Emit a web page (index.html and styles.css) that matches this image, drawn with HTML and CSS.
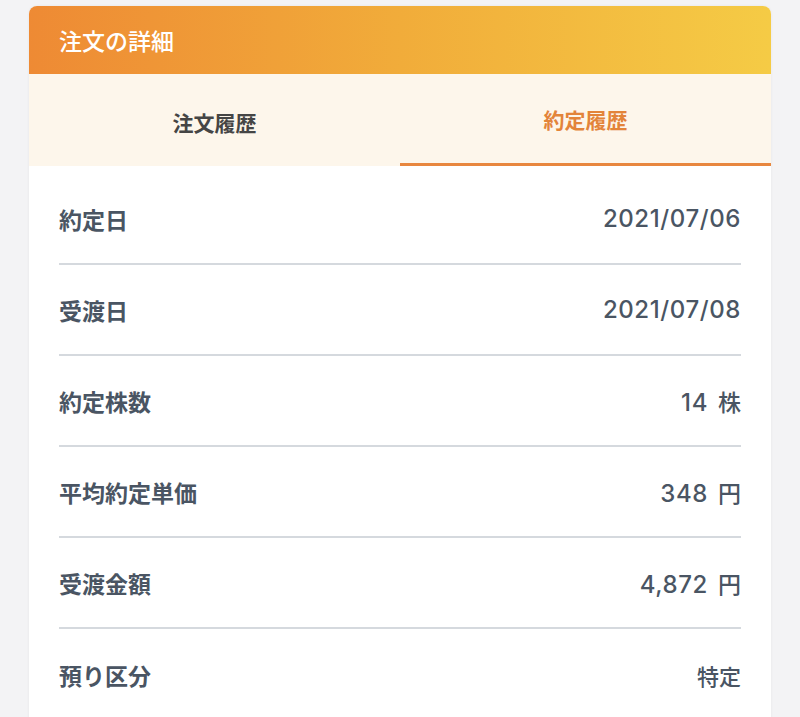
FILE: index.html
```html
<!DOCTYPE html>
<html lang="ja">
<head>
<meta charset="utf-8">
<link rel="stylesheet" href="styles.css">
</head>
<body>
<div class="card">
  <div class="card-header">注文の詳細</div>
  <div class="tabs">
    <div class="tab">注文履歴</div>
    <div class="tab active">約定履歴</div>
  </div>
  <div class="rows">
    <div class="row"><span class="label">約定日</span><span class="value">2021/07/06</span></div>
    <div class="row"><span class="label">受渡日</span><span class="value">2021/07/08</span></div>
    <div class="row"><span class="label">約定株数</span><span class="value">14<span class="unit">株</span></span></div>
    <div class="row"><span class="label">平均約定単価</span><span class="value">348<span class="unit">円</span></span></div>
    <div class="row"><span class="label">受渡金額</span><span class="value">4,872<span class="unit">円</span></span></div>
    <div class="row last"><span class="label">預り区分</span><span class="value text">特定</span></div>
  </div>
</div>
</body>
</html>
```
FILE: styles.css
```css
html, body {
  margin: 0;
  padding: 0;
  background: #f3f3f5;
  font-family: "Noto Sans CJK JP", "Noto Sans", sans-serif;
}
body {
  padding: 6px 29px 0 29px;
  height: 717px;
  box-sizing: border-box;
  overflow: hidden;
}
.card {
  background: #ffffff;
  border-radius: 8px 8px 0 0;
  overflow: hidden;
  box-shadow: 0 0 3px rgba(0,0,0,0.06);
}
.card-header {
  height: 68px;
  display: flex;
  align-items: center;
  padding-left: 30px;
  color: #ffffff;
  font-size: 23px;
  font-weight: 500;
  background: linear-gradient(90deg, #ee8a34 0%, #f1ac3a 50%, #f5cb45 100%);
}
.tabs {
  display: flex;
  background: #fdf6eb;
  height: 92px;
}
.tab {
  flex: 1;
  display: flex;
  align-items: center;
  justify-content: center;
  font-size: 21px;
  font-weight: 700;
  color: #454545;
  box-sizing: border-box;
  padding-top: 3px;
}
.tab.active {
  color: #e3843a;
  border-bottom: 3px solid #e8873f;
  padding-top: 0;
}
.rows {
  padding: 8px 30px 0 30px;
}
.row {
  height: 91px;
  box-sizing: border-box;
  border-bottom: 2px solid #d5d9de;
  display: flex;
  align-items: center;
  justify-content: space-between;
  color: #4a5563;
  font-size: 23px;
}
.row.last {
  border-bottom: none;
}
.label {
  font-weight: 700;
}
.value {
  font-family: "Inter", "Noto Sans CJK JP", sans-serif;
  font-weight: 500;
  font-size: 24px;
  letter-spacing: 0.6px;
}
.value.text {
  font-family: "Noto Sans CJK JP", sans-serif;
  font-size: 22px;
  letter-spacing: 0;
}
.unit {
  font-family: "Noto Sans CJK JP", sans-serif;
  font-size: 23px;
  letter-spacing: 0;
  margin-left: 10px;
}
```
